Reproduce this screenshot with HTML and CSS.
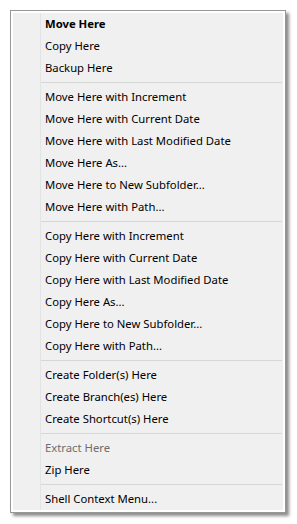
FILE: index.html
```
<!DOCTYPE html>
<html lang="en">

<head>
    <meta charset="UTF-8">
    <meta name="viewport" content="width=device-width, initial-scale=1.0">
    <title>Drop Menu</title>
    <link rel="stylesheet" href="styles.css">
</head>

<body>
    <div class="menu">
        <div class="item default">Move Here</div>
        <div class="item">Copy Here</div>
        <div class="item">Backup Here</div>
        <div class="sep"></div>
        <div class="item">Move Here with Increment</div>
        <div class="item">Move Here with Current Date</div>
        <div class="item">Move Here with Last Modified Date</div>
        <div class="item">Move Here As...</div>
        <div class="item">Move Here to New Subfolder...</div>
        <div class="item">Move Here with Path...</div>
        <div class="sep"></div>
        <div class="item">Copy Here with Increment</div>
        <div class="item">Copy Here with Current Date</div>
        <div class="item">Copy Here with Last Modified Date</div>
        <div class="item">Copy Here As...</div>
        <div class="item">Copy Here to New Subfolder...</div>
        <div class="item">Copy Here with Path...</div>
        <div class="sep"></div>
        <div class="item">Create Folder(s) Here</div>
        <div class="item">Create Branch(es) Here</div>
        <div class="item">Create Shortcut(s) Here</div>
        <div class="sep"></div>
        <div class="item disabled">Extract Here</div>
        <div class="item">Zip Here</div>
        <div class="sep"></div>
        <div class="item">Shell Context Menu...</div>
    </div>
</body>

</html>
```

FILE: styles.css
```
body {
    margin: 0;
    padding: 10px;
    background-color: #ffffff;
    font-family: "Noto Sans", "Liberation Sans", sans-serif;
    font-size: 11.3px;
}

.menu {
    width: 270px;
    padding: 2px;
    background-color: #f0f0f0;
    border: 1px solid #979797;
    box-shadow: 3px 3px 3px rgba(0, 0, 0, 0.45);
    display: flex;
    flex-direction: column;
    /* gutter line where the icons would sit */
    background-image: linear-gradient(#e2e3e3, #e2e3e3);
    background-size: 1px 100%;
    background-position: 27px 0;
    background-repeat: no-repeat;
    background-origin: content-box;
    background-clip: content-box;
}

.item {
    height: 22px;
    line-height: 22px;
    padding-left: 32px;
    color: #000000;
    white-space: nowrap;
}

.item.default {
    font-weight: bold;
}

.item.disabled {
    color: #6d6d6d;
}

.sep {
    height: 1px;
    margin: 3px 1px 3px 28px;
    background-color: #d7d7d7;
}
```
